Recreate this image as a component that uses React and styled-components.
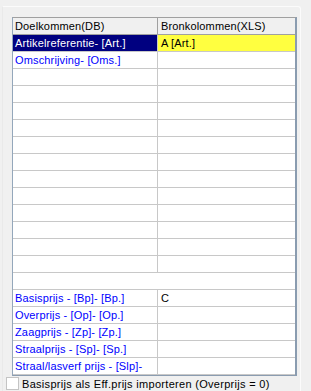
import React from 'react';
import styled, { createGlobalStyle } from 'styled-components';

const GlobalStyle = createGlobalStyle`
  html, body {
    margin: 0;
    padding: 0;
    background: #f0f0f0;
  }
  body {
    font-family: "Liberation Sans", Arial, sans-serif;
    font-size: 11px;
  }
`;

const Page = styled.div`
  width: 311px;
  height: 391px;
  overflow: hidden;
  background: #f0f0f0;
  padding: 6px 0 0 2px;
  box-sizing: border-box;
`;

const Frame = styled.div`
  width: 299px;
  height: 386px;
  box-sizing: border-box;
  border-top: 1px solid #fbfbfb;
  border-right: 1px solid #fbfbfb;
  border-left: 1px solid #e9e9e9;
  border-top-right-radius: 3px;
  padding-top: 10px;
  display: flex;
  flex-direction: column;
`;

const Grid = styled.div`
  width: 285px;
  margin-left: 9px;
  box-sizing: border-box;
  background: #fff;
  border-top: 1px solid #a0a0a0;
  border-left: 1px solid #94a7bb;
  border-right: 2px solid #8a9cb0;
  border-bottom: 1px solid #8a9cb0;
`;

const Row = styled.div`
  display: grid;
  grid-template-columns: 145px 137px;
  height: 17px;
  box-sizing: border-box;
  border-bottom: 1px solid ${({ $head }) => ($head ? '#a0a0a0' : '#c8c8c8')};
  background: ${({ $head }) => ($head ? '#f0f0f0' : '#fff')};
`;

const FullRow = styled.div`
  height: 17px;
  box-sizing: border-box;
  border-bottom: 1px solid #c8c8c8;
`;

const Cell = styled.div`
  box-sizing: border-box;
  height: 16px;
  line-height: 16px;
  white-space: nowrap;
  overflow: hidden;
  letter-spacing: 0.15px;
  padding-left: ${({ $first }) => ($first ? '2px' : '3px')};
  border-right: ${({ $first, $head }) =>
    $first ? `1px solid ${$head ? '#a0a0a0' : '#c8c8c8'}` : 'none'};
  color: ${({ $tone }) =>
    $tone === 'sel' ? '#fff' : $tone === 'link' ? '#0000ff' : '#000'};
  background: ${({ $bg }) => $bg || 'transparent'};
`;

const CheckRow = styled.label`
  display: flex;
  align-items: center;
  gap: 3px;
  height: 15px;
  margin-left: 3px;
  color: #000;
  white-space: nowrap;
  letter-spacing: 0.3px;
`;

const Box = styled.span`
  width: 13px;
  height: 13px;
  box-sizing: border-box;
  background: #fff;
  border: 1px solid #c4c4c4;
  flex: none;
`;

const prices = [
  ['Basisprijs - [Bp]- [Bp.]', 'C'],
  ['Overprijs - [Op]- [Op.]', ''],
  ['Zaagprijs - [Zp]- [Zp.]', ''],
  ['Straalprijs - [Sp]- [Sp.]', ''],
  ['Straal/lasverf prijs - [Slp]-', ''],
];

export default function App() {
  return (
    <>
      <GlobalStyle />
      <Page>
        <Frame>
          <Grid>
            <Row $head>
              <Cell $first $head>Doelkommen(DB)</Cell>
              <Cell $head>Bronkolommen(XLS)</Cell>
            </Row>
            <Row>
              <Cell $first $tone="sel" $bg="#000080">Artikelreferentie- [Art.]</Cell>
              <Cell $bg="#ffff40">A [Art.]</Cell>
            </Row>
            <Row>
              <Cell $first $tone="link">Omschrijving- [Oms.]</Cell>
              <Cell />
            </Row>
            {Array.from({ length: 12 }).map((_, i) => (
              <Row key={i}>
                <Cell $first />
                <Cell />
              </Row>
            ))}
            <FullRow />
            {prices.map(([target, source]) => (
              <Row key={target}>
                <Cell $first $tone="link">{target}</Cell>
                <Cell>{source}</Cell>
              </Row>
            ))}
          </Grid>
          <CheckRow>
            <Box />
            Basisprijs als Eff.prijs importeren (Overprijs = 0)
          </CheckRow>
        </Frame>
      </Page>
    </>
  );
}
